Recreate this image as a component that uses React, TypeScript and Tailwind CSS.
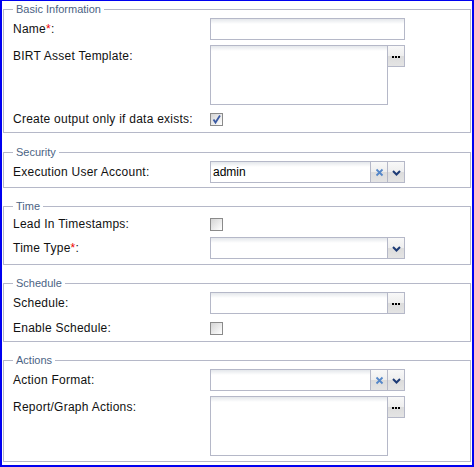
import React from "react";

const inputBg = "bg-[linear-gradient(to_bottom,#e4e7eb_0px,#ffffff_5px)]";
const triggerBg =
  "bg-[linear-gradient(to_bottom,#f8f8f8_0%,#eeeeee_50%,#dcdcdc_50%,#e4e4e4_100%)]";

function Legend({ children }: { children: React.ReactNode }) {
  return (
    <span className="-mt-[8px] self-start bg-white px-[3px] text-[11px] leading-[14px] text-[#4b6384]">
      {children}
    </span>
  );
}

function FieldSet({
  title,
  children,
  top,
  bottom,
}: {
  title: string;
  children: React.ReactNode;
  top: string;
  bottom: string;
}) {
  return (
    <div className={`mx-[1px] flex flex-col border border-[#b5b8c8] pl-[9px] ${top} ${bottom}`}>
      <Legend>{title}</Legend>
      <div className="mt-[2px] flex flex-col gap-[5px]">{children}</div>
    </div>
  );
}

function Label({ text, req, lh = "leading-[22px]" }: { text: string; req?: boolean; lh?: string }) {
  return (
    <div className={`w-[197px] shrink-0 text-[12px] tracking-[0.25px] text-[#111111] ${lh}`}>
      {text}
      {req && <span className="text-[#ee0000]">*</span>}:
    </div>
  );
}

function Dots() {
  return (
    <div className="mt-[10px] flex justify-center gap-[1px]">
      <span className="h-[2px] w-[2px] bg-black" />
      <span className="h-[2px] w-[2px] bg-black" />
      <span className="h-[2px] w-[2px] bg-black" />
    </div>
  );
}

function ClearIcon() {
  return (
    <svg width="9" height="9" viewBox="0 0 9 9" className="mt-[6px] mx-auto block">
      <path d="M1.5 1.5 L7.5 7.5 M7.5 1.5 L1.5 7.5" stroke="#5587c8" strokeWidth="1.8" fill="none" />
    </svg>
  );
}

function ArrowIcon() {
  return (
    <svg width="9" height="6" viewBox="0 0 9 6" className="mt-[8px] mx-auto block">
      <path d="M1 1 L4.5 4.5 L8 1" stroke="#1d3b76" strokeWidth="2" fill="none" />
    </svg>
  );
}

function Trigger({ children }: { children: React.ReactNode }) {
  return <div className={`h-full w-[17px] shrink-0 border-l border-[#b5b8c8] ${triggerBg}`}>{children}</div>;
}

function TextRow({ label, req }: { label: string; req?: boolean }) {
  return (
    <div className="flex h-[22px]">
      <Label text={label} req={req} />
      <div className={`h-[22px] w-[195px] border border-[#b5b8c8] ${inputBg}`} />
    </div>
  );
}

function TriggerRow({
  label,
  req,
  value,
  clear,
  arrow,
  dots,
}: {
  label: string;
  req?: boolean;
  value?: string;
  clear?: boolean;
  arrow?: boolean;
  dots?: boolean;
}) {
  return (
    <div className="flex h-[22px]">
      <Label text={label} req={req} />
      <div className="flex h-[22px] w-[195px] border border-[#b5b8c8]">
        <div className={`flex-1 pl-[2px] text-[12px] leading-[20px] text-black ${inputBg}`}>{value}</div>
        {clear && (
          <Trigger>
            <ClearIcon />
          </Trigger>
        )}
        {arrow && (
          <Trigger>
            <ArrowIcon />
          </Trigger>
        )}
        {dots && (
          <Trigger>
            <Dots />
          </Trigger>
        )}
      </div>
    </div>
  );
}

function AreaRow({ label }: { label: string }) {
  return (
    <div className="flex h-[60px]">
      <Label text={label} />
      <div className={`h-[60px] w-[178px] border border-[#b5b8c8] ${inputBg}`} />
      <div className={`h-[22px] w-[17px] border-y border-r border-[#b5b8c8] ${triggerBg}`}>
        <Dots />
      </div>
    </div>
  );
}

function CheckBox({ checked }: { checked?: boolean }) {
  return (
    <div className="mt-[3px] h-[13px] w-[13px] border border-[#8a8a8a] bg-[linear-gradient(135deg,#d4d4d4,#ffffff)]">
      {checked && (
        <svg width="11" height="11" viewBox="0 0 11 11" className="block">
          <path d="M2.5 5.5 L4.5 8.5 L9 1.5" stroke="#3b5aa3" strokeWidth="1.8" fill="none" />
        </svg>
      )}
    </div>
  );
}

function CheckRow({ label, checked }: { label: string; checked?: boolean }) {
  return (
    <div className="flex h-[17px] items-start">
      <Label text={label} lh="leading-[19px]" />
      <CheckBox checked={checked} />
    </div>
  );
}

export default function App() {
  return (
    <div className="h-[467px] w-[474px] border-x-2 border-b-2 border-t border-[#0000f0] bg-white font-['Liberation_Sans',Arial,sans-serif]">
      <div className="flex flex-col pt-[8px]">
        <FieldSet title="Basic Information" top="mt-0" bottom="pb-[5px]">
          <TextRow label="Name" req />
          <AreaRow label="BIRT Asset Template" />
          <CheckRow label="Create output only if data exists" checked />
        </FieldSet>
        <FieldSet title="Security" top="mt-[19px]" bottom="pb-[4px]">
          <TriggerRow label="Execution User Account" value="admin" clear arrow />
        </FieldSet>
        <FieldSet title="Time" top="mt-[18px]" bottom="pb-[5px]">
          <CheckRow label="Lead In Timestamps" />
          <TriggerRow label="Time Type" req arrow />
        </FieldSet>
        <FieldSet title="Schedule" top="mt-[18px]" bottom="pb-[5px]">
          <TriggerRow label="Schedule" dots />
          <CheckRow label="Enable Schedule" />
        </FieldSet>
        <FieldSet title="Actions" top="mt-[18px]" bottom="pb-[5px]">
          <TriggerRow label="Action Format" clear arrow />
          <AreaRow label="Report/Graph Actions" />
        </FieldSet>
      </div>
    </div>
  );
}
